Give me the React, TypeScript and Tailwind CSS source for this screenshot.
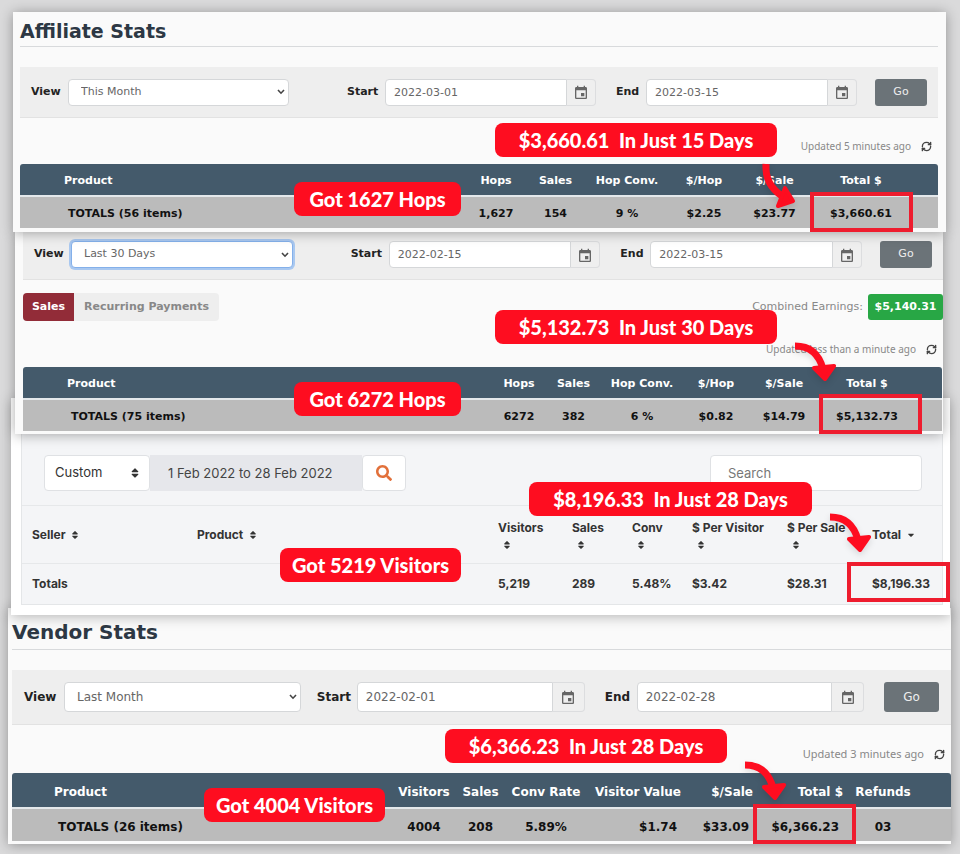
import { useId } from 'react';
import type { ReactNode } from 'react';
import clsx from 'clsx';
import { FaSearch, FaSort, FaSortDown } from 'react-icons/fa';
import { MdEvent } from 'react-icons/md';
import { LuRefreshCw } from 'react-icons/lu';

interface FilterBarProps {
  view: string;
  start: string;
  end: string;
  large?: boolean;
  focused?: boolean;
  className?: string;
}

interface DateFieldProps {
  label: string;
  value: string;
  large?: boolean;
  className: string;
  labelClass: string;
}

interface Column {
  label: string;
  value: string;
  width: string;
  align?: string;
  valueAlign?: string;
}

interface StatsTableProps {
  totals: string;
  columns: Array<Column>;
  filler: string;
  large?: boolean;
}

const affiliateColumns: Array<Column> = [
  { label: 'Hops', value: '1,627', width: 'w-[60px]' },
  { label: 'Sales', value: '154', width: 'w-[59px]' },
  { label: 'Hop Conv.', value: '9 %', width: 'w-[84px]' },
  { label: '$/Hop', value: '$2.25', width: 'w-[70px]' },
  { label: '$/Sale', value: '$23.77', width: 'w-[71px]' },
  { label: 'Total $', value: '$3,660.61', width: 'w-[102px]' },
];

const monthColumns: Array<Column> = [
  { label: 'Hops', value: '6272', width: 'w-[54px]' },
  { label: 'Sales', value: '382', width: 'w-[55px]' },
  { label: 'Hop Conv.', value: '6 %', width: 'w-[82px]' },
  { label: '$/Hop', value: '$0.82', width: 'w-[66px]' },
  { label: '$/Sale', value: '$14.79', width: 'w-[70px]' },
  { label: 'Total $', value: '$5,132.73', width: 'w-[96px]' },
];

const vendorColumns: Array<Column> = [
  { label: 'Visitors', value: '4004', width: 'w-[56px]' },
  { label: 'Sales', value: '208', width: 'w-[57px]' },
  { label: 'Conv Rate', value: '5.89%', width: 'w-[74px]' },
  {
    label: 'Visitor Value',
    value: '$1.74',
    width: 'w-[98px]',
    align: 'text-right',
    valueAlign: 'text-right pr-1',
  },
  {
    label: '$/Sale',
    value: '$33.09',
    width: 'w-[72px]',
    align: 'text-right',
    valueAlign: 'text-right pr-1',
  },
  {
    label: 'Total $',
    value: '$6,366.23',
    width: 'w-[90px]',
    align: 'text-right',
    valueAlign: 'text-right pr-1',
  },
  { label: 'Refunds', value: '03', width: 'w-[80px]' },
];

const sellerColumns = [
  { label: 'Visitors', value: '5,219', width: 'w-[74px]' },
  { label: 'Sales', value: '289', width: 'w-[60px]' },
  { label: 'Conv', value: '5.48%', width: 'w-[60px]' },
  { label: '$ Per Visitor', value: '$3.42', width: 'w-[95px]' },
  { label: '$ Per Sale', value: '$28.31', width: 'w-[85px]' },
];

const DateField = ({ label, value, large, className, labelClass }: DateFieldProps) => {
  const id = useId();

  return (
    <div className={clsx('flex items-center', className)}>
      <label htmlFor={id} className={clsx('shrink-0 font-bold text-[#222]', labelClass)}>
        {label}
      </label>
      <input
        id={id}
        defaultValue={value}
        className={clsx(
          'min-w-0 flex-1 rounded-l-sm border border-[#d5d7d9] bg-white px-2 text-[#666] outline-none',
          large ? 'h-[30px]' : 'h-[27px]'
        )}
      />
      <button
        aria-label={`Open ${label} calendar`}
        className={clsx(
          'flex shrink-0 items-center justify-center rounded-r-sm border border-l-0 border-[#dcdddf] bg-[#efefef] pt-0.5 text-[#666]',
          large ? 'h-[30px] w-8' : 'h-[27px] w-[29px]'
        )}
      >
        <MdEvent className="h-4 w-4" />
      </button>
    </div>
  );
};

const FilterBar = ({ view, start, end, large, focused, className }: FilterBarProps) => {
  const id = useId();

  return (
    <form
      onSubmit={(e) => e.preventDefault()}
      className={clsx(
        'flex items-center border-b border-[#e2e2e2] bg-[#eee]',
        large ? 'px-3 text-xs' : 'px-[11px] text-[11px]',
        className
      )}
    >
      <div className="flex flex-[258] items-center">
        <label
          htmlFor={id}
          className={clsx('shrink-0 font-bold text-[#222]', large ? 'w-10' : 'w-[37px]')}
        >
          View
        </label>
        <div className="relative flex-1">
          <select
            id={id}
            className={clsx(
              'block w-full appearance-none rounded-sm border bg-white px-3 text-[#666] outline-none',
              large ? 'h-[30px]' : 'h-[27px]',
              focused ? 'border-[#84b0ea] ring-2 ring-[#a9c8f0]' : 'border-[#d5d7d9]'
            )}
          >
            <option>{view}</option>
          </select>
          <svg
            viewBox="0 0 8 6"
            className="pointer-events-none absolute top-1/2 right-1 h-1.5 w-2 -translate-y-1/2"
          >
            <path d="M1 1l3 3.2L7 1" fill="none" stroke="#444" strokeWidth="1.6" />
          </svg>
        </div>
      </div>
      <div className={clsx('flex flex-[510] gap-5', large ? 'ml-4' : 'ml-[58px]')}>
        <DateField
          label="Start"
          value={start}
          large={large}
          className="flex-[249]"
          labelClass={large ? 'w-10' : 'w-[38px]'}
        />
        <DateField
          label="End"
          value={end}
          large={large}
          className="flex-[241]"
          labelClass={large ? 'w-8' : 'w-[30px]'}
        />
      </div>
      <button
        className={clsx(
          'shrink-0 rounded-[3px] bg-[#6b7378] text-[#eee]',
          large ? 'ml-5 h-[30px] w-[55px]' : 'ml-[18px] h-[27px] w-[52px]'
        )}
      >
        Go
      </button>
    </form>
  );
};

const StatsTable = ({ totals, columns, filler, large }: StatsTableProps) => (
  <table
    className={clsx(
      'w-full table-fixed text-center font-bold whitespace-nowrap [&_td]:pt-1 [&_th]:pt-1',
      large ? 'text-xs' : 'text-[11px]'
    )}
  >
    <thead>
      <tr className={clsx('bg-[#445a6b] text-white', large ? 'h-[35px]' : 'h-8')}>
        <th className={clsx('rounded-tl-[3px] text-left', large ? 'pl-[42px]' : 'pl-11')}>Product</th>
        {columns.map(({ label, width, align }) => (
          <th key={label} className={clsx(width, align)}>
            {label}
          </th>
        ))}
        <th className={clsx('rounded-tr-[3px]', filler)} />
      </tr>
    </thead>
    <tbody>
      <tr
        className={clsx(
          'border-t-2 border-[#e4e8eb] bg-[#bbb] text-[#111]',
          large ? 'h-[33px]' : 'h-8'
        )}
      >
        <td className={clsx('text-left', large ? 'pl-[46px]' : 'pl-12')}>{totals}</td>
        {columns.map(({ label, value, valueAlign }) => (
          <td key={label} className={valueAlign}>
            {value}
          </td>
        ))}
        <td />
      </tr>
    </tbody>
  </table>
);

const Updated = ({ children, large }: { children: ReactNode; large?: boolean }) => (
  <div
    className={clsx(
      "flex items-center justify-end gap-2.5 font-['Noto_Sans',sans-serif] text-[#888]",
      large ? 'text-[11px]' : 'text-[10px]'
    )}
  >
    <span>{children}</span>
    <button aria-label="Refresh" className="text-[#444]">
      <LuRefreshCw className="h-[11px] w-[11px] stroke-3" />
    </button>
  </div>
);

// Annotations that lie over the panels
const Badge = ({ children, className }: { children: ReactNode; className: string }) => (
  <div
    className={clsx(
      'absolute z-10 flex h-[34px] items-center justify-center rounded-lg bg-[#fe0d20] font-[Lato,sans-serif] text-xl font-black whitespace-pre text-white',
      className
    )}
  >
    {children}
  </div>
);

const Highlight = ({ className }: { className: string }) => (
  <div className={clsx('absolute z-10 border-4 border-[#ee1c2e]', className)} />
);

const Arrow = ({ className, steep }: { className: string; steep?: boolean }) => (
  <svg
    viewBox="0 0 42 50"
    fill="none"
    stroke="#fe0d20"
    className={clsx('absolute z-20 h-[50px] w-[42px] drop-shadow-md', className)}
  >
    <path d={steep ? 'M6 4C5 18 10 28 22 36' : 'M1 5C16 5 25 13 29 28'} strokeWidth="7" />
    <path
      d={steep ? 'M25 28l8 13-15 5z' : 'M20 27l11 11 9-13z'}
      fill="#fe0d20"
      strokeWidth="4"
      strokeLinejoin="round"
    />
  </svg>
);

const SellerPanel = () => (
  <section className="relative z-20 mr-2.5 -mt-9 ml-[11px] bg-white pr-[7px] pb-2.5 pl-2.5 font-[Inter,sans-serif] text-[13px] text-[#333] shadow-[0_2px_12px_#0004]">
    <div className="border border-[#e4e6e8] bg-[#f4f5f7] pt-14">
      <div className="flex items-center pr-5 pb-3.5 pl-[22px]">
        <div className="relative">
          <select
            aria-label="Period"
            className="block h-9 w-[106px] appearance-none rounded-sm border border-[#dfe1e4] bg-white px-2.5 outline-none"
          >
            <option>Custom</option>
          </select>
          <FaSort className="pointer-events-none absolute top-3 right-2.5 h-3 w-2.5" />
        </div>
        <input
          aria-label="Date range"
          defaultValue="1 Feb 2022 to 28 Feb 2022"
          className="h-9 w-[212px] bg-[#e6e7eb] px-[18px] text-[#444] outline-none"
        />
        <button
          aria-label="Apply date range"
          className="flex h-9 w-11 items-center justify-center rounded-sm border border-[#dfe1e4] bg-white text-[#e2703a]"
        >
          <FaSearch className="h-4 w-4" />
        </button>
        <input
          type="search"
          placeholder="Search"
          aria-label="Search"
          className="ml-auto h-9 w-[212px] rounded-sm border border-[#dfe1e4] bg-white px-[17px] outline-none placeholder:text-[#777]"
        />
      </div>
      <table className="w-full table-fixed text-left text-xs font-bold whitespace-nowrap">
        <thead>
          <tr className="h-[58px] border-t border-[#e6e8ea]">
            <th className="w-[175px] pl-2.5">
              Seller <FaSort className="ml-0.5 inline h-2.5 w-2.5" />
            </th>
            <th>
              Product <FaSort className="ml-0.5 inline h-2.5 w-2.5" />
            </th>
            {sellerColumns.map(({ label, width }) => (
              <th key={label} className={width}>
                {label}
                <FaSort className="mt-1 ml-1 h-2.5 w-2.5" />
              </th>
            ))}
            <th className="w-[70px]">
              Total <FaSortDown className="mb-1 ml-0.5 inline h-2.5 w-2.5" />
            </th>
          </tr>
        </thead>
        <tbody>
          <tr className="h-10 border-t border-[#e6e8ea]">
            <td className="pl-2.5">Totals</td>
            <td />
            {sellerColumns.map(({ label, value }) => (
              <td key={label}>{value}</td>
            ))}
            <td>$8,196.33</td>
          </tr>
        </tbody>
      </table>
    </div>
    <Badge className="top-[84px] right-[138px] w-[283px]">$8,196.33  In Just 28 Days</Badge>
    <Badge className="top-[150px] left-[269px] w-[181px]">Got 5219 Visitors</Badge>
    <Arrow className="top-[114px] right-[79px]" />
    <Highlight className="top-[164px] right-0 h-10 w-[103px]" />
  </section>
);

const App = () => {
  return (
    <main className="min-h-screen bg-[#dadadb] pt-3 pb-2.5 font-['DejaVu_Sans',Verdana,sans-serif]">
      <section className="relative z-40 mr-3.5 ml-[13px] bg-[#fafafa] pr-2 pb-1 pl-[7px] shadow-[0_1px_12px_#0005]">
        <h1 className="mb-5 flex h-[35px] items-center border-b border-[#d8dadc] pt-1 text-[19px] font-bold text-[#2d3844]">
          Affiliate Stats
        </h1>
        <FilterBar view="This Month" start="2022-03-01" end="2022-03-15" className="h-[51px]" />
        <div className="flex h-[46px] items-end justify-end pr-1.5 pb-2.5">
          <Updated>Updated 5 minutes ago</Updated>
        </div>
        <StatsTable totals="TOTALS (56 items)" columns={affiliateColumns} filler="w-[26px]" />
        <Badge className="top-[111px] right-[169px] w-[282px]">$3,660.61  In Just 15 Days</Badge>
        <Badge className="top-[170px] left-[281px] w-[167px]">Got 1627 Hops</Badge>
        <Arrow steep className="top-[148px] right-[144px]" />
        <Highlight className="right-[33px] bottom-0 h-10 w-[103px]" />
      </section>

      <section className="relative z-30 mr-[17px] ml-[15px] bg-[#fafafa] pb-[3px] pl-2 shadow-[0_1px_12px_#0005]">
        <FilterBar
          view="Last 30 Days"
          start="2022-02-15"
          end="2022-03-15"
          focused
          className="h-12 pb-0.5"
        />
        <div className="mt-[13px] flex items-center justify-between text-[11px]">
          <div className="flex h-7 font-bold">
            <button className="w-[51px] rounded-l-sm bg-[#922c38] text-white">Sales</button>
            <button className="w-[145px] rounded-r-sm bg-[#eee] text-[#888]">
              Recurring Payments
            </button>
          </div>
          <div className="flex items-center gap-[5px] text-[#888]">
            Combined Earnings:
            <span className="flex h-[26px] w-[75px] items-center justify-center rounded-[3px] bg-[#28a745] font-bold text-white">
              $5,140.31
            </span>
          </div>
        </div>
        <div className="flex h-[46px] items-end justify-end pr-1.5 pb-2.5">
          <Updated>Updated less than a minute ago</Updated>
        </div>
        <div className="pr-px">
          <StatsTable totals="TOTALS (75 items)" columns={monthColumns} filler="w-[27px]" />
        </div>
        <Badge className="top-[78px] right-[166px] w-[282px]">$5,132.73  In Just 30 Days</Badge>
        <Badge className="top-[150px] left-[279px] w-[167px]">Got 6272 Hops</Badge>
        <Arrow className="top-[109px] right-[107px]" />
        <Highlight className="right-[21px] bottom-0 h-10 w-[103px]" />
      </section>

      <SellerPanel />

      <section className="relative z-10 mr-[9px] -mt-[7px] ml-2 bg-[#fafafa] pb-[3px] pl-1 shadow-[0_1px_12px_#0005]">
        <h2 className="mb-5 flex h-[42px] items-center border-b border-[#d8dadc] pt-2 text-xl font-bold text-[#2d3844]">
          Vendor Stats
        </h2>
        <FilterBar view="Last Month" start="2022-02-01" end="2022-02-28" large className="h-[55px]" />
        <div className="flex h-12 items-end justify-end pr-1.5 pb-2.5">
          <Updated large>Updated 3 minutes ago</Updated>
        </div>
        <StatsTable totals="TOTALS (26 items)" columns={vendorColumns} filler="w-[28px]" large />
        <Badge className="right-[224px] bottom-[81px] w-[282px]">$6,366.23  In Just 28 Days</Badge>
        <Badge className="bottom-[22px] left-[196px] w-[181px]">Got 4004 Visitors</Badge>
        <Arrow className="right-[165px] bottom-[34px]" />
        <Highlight className="right-[95px] bottom-0 h-10 w-[103px]" />
      </section>
    </main>
  );
};

export default App;
